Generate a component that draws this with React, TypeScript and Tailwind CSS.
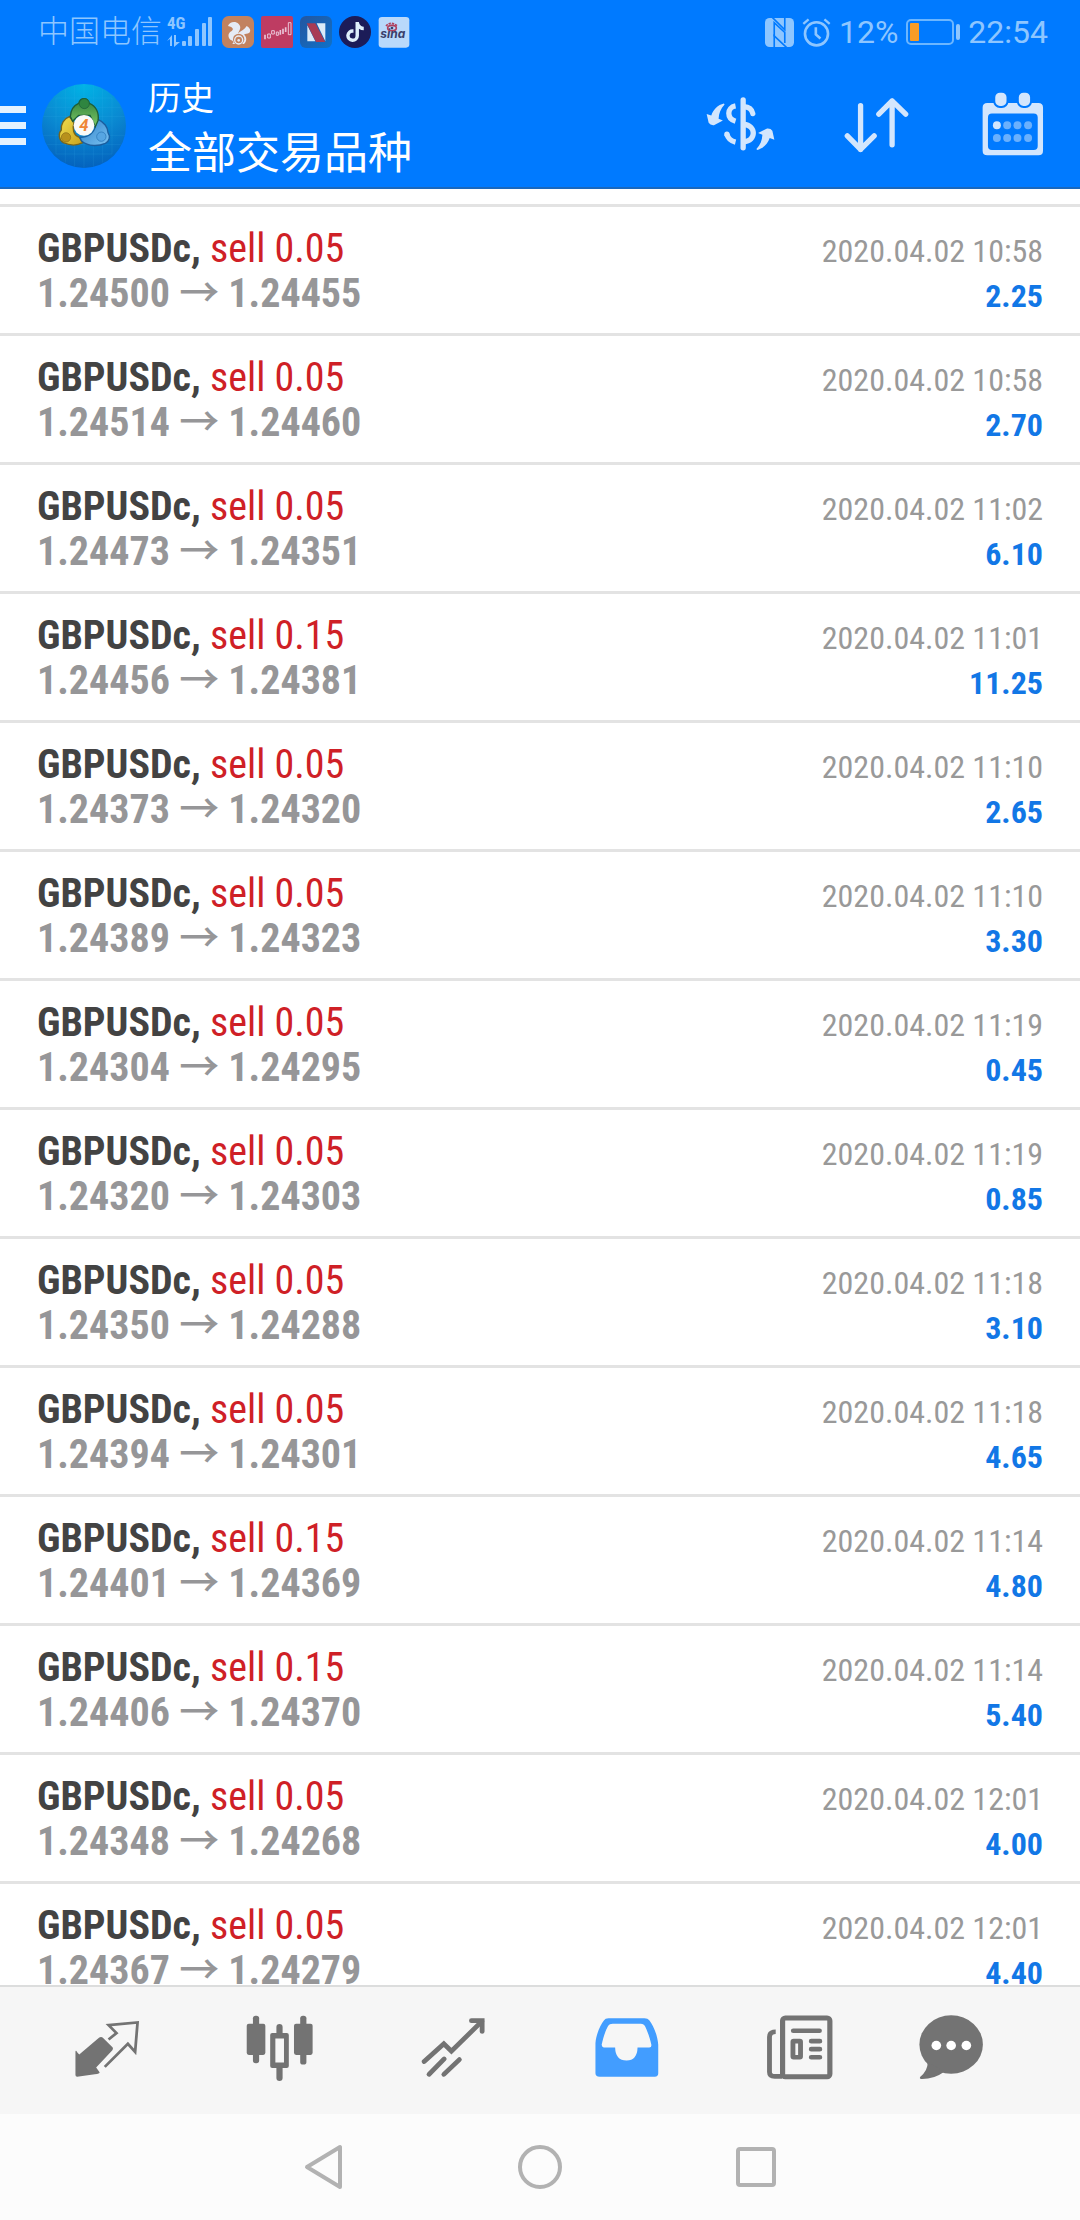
import type { ReactNode } from 'react';
import { FaTiktok } from 'react-icons/fa6';

type Deal = {
  volume: string;
  open: string;
  close: string;
  time: string;
  profit: string;
};

const deals: Deal[] = [
  { volume: '0.05', open: '1.24500', close: '1.24455', time: '2020.04.02 10:58', profit: '2.25' },
  { volume: '0.05', open: '1.24514', close: '1.24460', time: '2020.04.02 10:58', profit: '2.70' },
  { volume: '0.05', open: '1.24473', close: '1.24351', time: '2020.04.02 11:02', profit: '6.10' },
  { volume: '0.15', open: '1.24456', close: '1.24381', time: '2020.04.02 11:01', profit: '11.25' },
  { volume: '0.05', open: '1.24373', close: '1.24320', time: '2020.04.02 11:10', profit: '2.65' },
  { volume: '0.05', open: '1.24389', close: '1.24323', time: '2020.04.02 11:10', profit: '3.30' },
  { volume: '0.05', open: '1.24304', close: '1.24295', time: '2020.04.02 11:19', profit: '0.45' },
  { volume: '0.05', open: '1.24320', close: '1.24303', time: '2020.04.02 11:19', profit: '0.85' },
  { volume: '0.05', open: '1.24350', close: '1.24288', time: '2020.04.02 11:18', profit: '3.10' },
  { volume: '0.05', open: '1.24394', close: '1.24301', time: '2020.04.02 11:18', profit: '4.65' },
  { volume: '0.15', open: '1.24401', close: '1.24369', time: '2020.04.02 11:14', profit: '4.80' },
  { volume: '0.15', open: '1.24406', close: '1.24370', time: '2020.04.02 11:14', profit: '5.40' },
  { volume: '0.05', open: '1.24348', close: '1.24268', time: '2020.04.02 12:01', profit: '4.00' },
  { volume: '0.05', open: '1.24367', close: '1.24279', time: '2020.04.02 12:01', profit: '4.40' },
];

function SignalIcon() {
  return (
    <svg viewBox="0 0 48 32" className="mr-2 ml-1 h-8 w-12 overflow-visible" fill="currentColor">
      <text x="1" y="13" fontSize="17" fontWeight="700" fontFamily="Roboto Condensed">
        4G
      </text>
      <path d="M1 25l5-6v11H4v-7zM8 19h2v7h4l-6 5z" />
      <rect x="16" y="25" width="4" height="5" rx="1" />
      <rect x="22" y="20" width="4" height="10" rx="1" />
      <rect x="29" y="13" width="4" height="17" rx="1" />
      <rect x="36" y="7" width="4" height="23" rx="1" />
      <rect x="42" y="1" width="4" height="29" rx="1" />
    </svg>
  );
}

function BrowserAppIcon() {
  return (
    <svg viewBox="0 0 96 96" className="size-8">
      <rect width="96" height="96" rx="20" fill="#c2825f" />
      <path
        d="M18 30C22 18 40 14 50 24C60 34 52 44 48 52C58 44 68 40 74 30C84 36 88 44 82 50C76 54 70 52 66 56C76 64 74 76 66 84H30C38 80 34 74 26 72C18 66 16 52 28 46C36 40 34 34 18 30Z"
        fill="#e6ebf5"
      />
      <circle cx="50" cy="70" r="17" fill="#c2825f" />
      <circle cx="50" cy="72" r="12" fill="none" stroke="#e6ebf5" strokeWidth="4" />
      <circle cx="50" cy="73" r="4" fill="#e6ebf5" />
    </svg>
  );
}

function StocksAppIcon() {
  return (
    <svg viewBox="0 0 96 96" className="size-8">
      <rect width="96" height="96" rx="6" fill="#be3c62" />
      <path
        d="M12 56v14M58 42v14M66 38v16M74 34v14"
        stroke="#e9c3d6"
        strokeWidth="5"
      />
      <path
        d="M20 54h8v12h-8zM32 44h8v10h-8zM46 48h6v10h-6zM82 20h8v36h-8z"
        fill="none"
        stroke="#e9c3d6"
        strokeWidth="3"
      />
    </svg>
  );
}

function MailAppIcon() {
  return (
    <svg viewBox="0 0 96 96" className="size-8">
      <defs>
        <linearGradient id="mail-bg" x1="0" y1="0" x2="1" y2="1">
          <stop offset="0" stopColor="#2456a0" />
          <stop offset="1" stopColor="#0f71c8" />
        </linearGradient>
      </defs>
      <rect width="96" height="96" rx="18" fill="url(#mail-bg)" />
      <path d="M22 28L46 76H22ZM50 22H76V76Z" fill="#dcebf8" />
      <path d="M20 22H46L76 78H48Z" fill="#a83b55" />
    </svg>
  );
}

function TikTokAppIcon() {
  return (
    <span className="flex size-8 items-center justify-center rounded-full bg-[#1c1c58] text-[#dff0fb]">
      <FaTiktok className="size-5" />
    </span>
  );
}

function SinaAppIcon() {
  return (
    <svg viewBox="0 0 96 96" className="size-8">
      <rect x="2" y="3" width="92" height="92" rx="10" fill="#b9d9fb" />
      <ellipse cx="42" cy="36" rx="13" ry="8" fill="none" stroke="#b0405e" strokeWidth="5" />
      <circle cx="42" cy="36" r="4" fill="#39406c" />
      <path d="M24 30Q38 14 58 30" fill="none" stroke="#b0405e" strokeWidth="5" strokeDasharray="7 3" />
      <text x="7" y="67" fontSize="36" fontWeight="700" fontStyle="italic" fontFamily="Inter" fill="#39406c">
        sina
      </text>
    </svg>
  );
}

function NfcIcon() {
  return (
    <svg viewBox="0 0 88 88" className="h-[29px] w-[29px]">
      <rect width="88" height="88" rx="14" fill="currentColor" />
      <g fill="none" stroke="#007aff" strokeWidth="5">
        <path d="M22 -2L60 36V-2" />
        <path d="M66 90L28 54V90" />
        <path d="M28 56V14L60 44V76" />
      </g>
    </svg>
  );
}

function AlarmIcon() {
  return (
    <svg viewBox="0 0 88 88" className="h-[29px] w-[29px]" fill="none" stroke="currentColor">
      <circle cx="44" cy="48" r="35" strokeWidth="8" />
      <path d="M42 28V50L56 62" strokeWidth="8" />
      <path d="M4 18L20 4M84 18L68 4" strokeWidth="7" />
    </svg>
  );
}

function BatteryIcon() {
  return (
    <svg viewBox="0 0 54 26" className="mx-2 h-[26px] w-[54px]">
      <rect x="1" y="1" width="46" height="24" rx="4" fill="none" stroke="#6cb6ff" strokeWidth="2" />
      <rect x="4" y="4" width="9" height="18" rx="1" fill="#f79c26" />
      <rect x="50" y="5" width="4" height="16" rx="2" fill="#8ec6ff" />
    </svg>
  );
}

function StatusBar() {
  return (
    <div className="flex h-16 items-center justify-between pr-8 pl-[38px] text-[#8ec6ff]">
      <div className="flex items-center">
        <span className="text-[31px] font-light">中国电信</span>
        <SignalIcon />
        <div className="flex items-center gap-[7px]">
          <BrowserAppIcon />
          <StocksAppIcon />
          <MailAppIcon />
          <TikTokAppIcon />
          <SinaAppIcon />
        </div>
      </div>
      <div className="flex items-center font-[Roboto,sans-serif] text-[32px]">
        <NfcIcon />
        <span className="mx-2 flex">
          <AlarmIcon />
        </span>
        <span>12%</span>
        <BatteryIcon />
        <span>22:54</span>
      </div>
    </div>
  );
}

function AppLogo() {
  return (
    <svg viewBox="18 18 252 252" className="size-[84px]">
      <defs>
        <radialGradient id="logo-bg" cx=".5" cy="0" r="1">
          <stop offset="0" stopColor="#00b4e6" />
          <stop offset=".55" stopColor="#0a8ad2" />
          <stop offset="1" stopColor="#0462bd" />
        </radialGradient>
        <linearGradient id="logo-green" x1="0" y1="0" x2="0" y2="1">
          <stop offset="0" stopColor="#2f7f3c" />
          <stop offset="1" stopColor="#7cc866" />
        </linearGradient>
        <linearGradient id="logo-yellow" x1="0" y1="0" x2="1" y2="1">
          <stop offset="0" stopColor="#f2e050" />
          <stop offset="1" stopColor="#c9a21c" />
        </linearGradient>
        <linearGradient id="logo-blue" x1="0" y1="0" x2="1" y2="1">
          <stop offset="0" stopColor="#2b7fc8" />
          <stop offset="1" stopColor="#7cc3f2" />
        </linearGradient>
      </defs>
      <circle cx="144" cy="144" r="126" fill="url(#logo-bg)" />
      <path
        d="M60 60V228M88 34V254M116 22V266M144 18V270M172 22V266M200 34V254M228 60V228M60 60H228M34 88H254M22 116H266M22 172H266M34 200H254M60 228H228"
        stroke="#46bdf0"
        strokeOpacity=".2"
        strokeWidth="2"
      />
      <path d="M100 116C84 122 74 138 76 156C66 166 68 186 82 194C100 202 122 204 140 194L130 178C112 172 108 152 114 134Z" fill="url(#logo-yellow)" stroke="#77651c" strokeWidth="4" />
      <path d="M186 124C204 132 216 148 216 164C224 176 220 190 208 196C190 204 158 208 136 188L132 178C156 178 174 166 178 144Z" fill="url(#logo-blue)" stroke="#1b5e9f" strokeWidth="4" />
      <path d="M144 62C152 62 158 68 160 76C180 84 190 104 186 128L178 146L162 112H128L110 130L103 116C104 96 114 82 128 76C130 68 136 62 144 62Z" fill="url(#logo-green)" stroke="#1d5d38" strokeWidth="4" />
      <circle cx="145" cy="77" r="15" fill="#2f8540" stroke="#1d5d38" strokeWidth="2" />
      <circle cx="90" cy="178" r="14" fill="#b8911c" stroke="#8a6d18" strokeWidth="2" />
      <circle cx="196" cy="176" r="14" fill="#56a5e2" stroke="#2471b4" strokeWidth="2" />
      <circle cx="144" cy="142" r="31" fill="#fbfaf8" />
      <text x="144" y="160" textAnchor="middle" fontSize="50" fontWeight="700" fontStyle="italic" fontFamily="Roboto" fill="#ef8636">
        4
      </text>
    </svg>
  );
}

function DollarIcon() {
  const arrow = 'M60 40C42 44 28 58 22 76L8 71L14 98Q19 106 30 105L57 91L44 86C45 70 50 55 62 43Z';
  return (
    <svg viewBox="0 0 220 200" className="h-[67px] w-[73px]" fill="none" stroke="currentColor" strokeWidth="16">
      <path d={arrow} fill="currentColor" stroke="none" />
      <path d={arrow} fill="currentColor" stroke="none" transform="rotate(180 110 110)" />
      <path d="M118 29V173" strokeLinecap="round" />
      <path d="M95 47C68 52 68 85 95 93" />
      <path d="M69 132Q74 151 95 156" />
      <path d="M69 132V133M120 49Q143 50 147 70" strokeLinecap="round" />
      <path d="M120 103C158 105 158 153 120 155" />
    </svg>
  );
}

function SortIcon() {
  return (
    <svg
      viewBox="0 0 220 200"
      className="h-[67px] w-[73px]"
      fill="none"
      stroke="currentColor"
      strokeWidth="16"
      strokeLinecap="round"
      strokeLinejoin="round"
    >
      <path d="M62 46V178M22 137L62 178L103 137" />
      <path d="M157 164V32M117 72L157 32L198 72" />
    </svg>
  );
}

function CalendarIcon() {
  return (
    <svg viewBox="0 0 220 200" className="h-[67px] w-[73px]" fill="currentColor">
      <path
        fillRule="evenodd"
        d="M34 38H188Q202 38 202 52V182Q202 196 188 196H34Q20 196 20 182V52Q20 38 34 38ZM48 70Q36 70 36 82V168Q36 180 48 180H174Q186 180 186 168V82Q186 70 174 70Z"
      />
      <g stroke="#007aff" strokeWidth="6">
        <rect x="55" y="4" width="40" height="46" rx="17" />
        <rect x="126" y="4" width="40" height="46" rx="17" />
      </g>
      <circle cx="63" cy="105" r="12" />
      <g opacity=".5">
        <circle cx="94" cy="105" r="12" />
        <circle cx="125" cy="105" r="12" />
        <circle cx="157" cy="105" r="12" />
        <circle cx="63" cy="144" r="12" />
        <circle cx="94" cy="144" r="12" />
        <circle cx="125" cy="144" r="12" />
        <circle cx="157" cy="144" r="12" />
      </g>
    </svg>
  );
}

function Header() {
  const actions: { label: string; icon: ReactNode }[] = [
    { label: '品种', icon: <DollarIcon /> },
    { label: '排序', icon: <SortIcon /> },
    { label: '日期', icon: <CalendarIcon /> },
  ];

  return (
    <header className="shrink-0 border-b-2 border-[#1a68bd] bg-[#007aff]">
      <StatusBar />
      <div className="flex h-[123px] items-center">
        <button type="button" aria-label="菜单" className="flex items-center gap-4 text-[#e4f2ff]">
          <svg viewBox="0 0 26 39" className="h-[39px] w-[26px]" fill="currentColor">
            <path d="M0 0H26V7H0ZM0 16H26V23H0ZM0 32H26V39H0Z" />
          </svg>
          <AppLogo />
        </button>
        <div className="ml-[22px] flex-1 pt-1.5 text-white">
          <p className="text-[33px] leading-[50px]">历史</p>
          <h1 className="text-[44px] leading-[60px] font-normal">全部交易品种</h1>
        </div>
        <div className="flex pb-1 text-[#d3e6fd]">
          {actions.map((action) => (
            <button
              key={action.label}
              type="button"
              aria-label={action.label}
              className="flex w-[136px] items-center justify-center"
            >
              {action.icon}
            </button>
          ))}
        </div>
      </div>
    </header>
  );
}

function DealRow({ deal }: { deal: Deal }) {
  return (
    <li className="border-t-[3px] border-[#e3e3e3] px-[37px] pt-[19px] pb-[17px] leading-[45px]">
      <div className="flex h-[45px] items-baseline justify-between">
        <p className="text-[40px] text-[#cf2026]">
          <span className="font-bold text-[#434343]">GBPUSDc,</span> sell {deal.volume}
        </p>
        <time className="text-[32px] text-[#999999]">{deal.time}</time>
      </div>
      <div className="flex h-[45px] items-baseline justify-between font-bold">
        <p className="text-[40px] text-[#969698]">
          {deal.open}{' '}
          <span className="font-['Noto_Sans_CJK_SC',sans-serif] leading-5 font-medium">→</span>{' '}
          {deal.close}
        </p>
        <p className="text-[32px] text-[#1277e6]">{deal.profit}</p>
      </div>
    </li>
  );
}

function TabIcon({ children }: { children: ReactNode }) {
  return (
    <svg
      viewBox="0 0 200 200"
      preserveAspectRatio="none"
      className="h-[67px] w-[69px] overflow-visible"
      fill="currentColor"
    >
      {children}
    </svg>
  );
}

function QuotesIcon() {
  return (
    <TabIcon>
      <path d="M10 115Q11 110 15 117L21 124L79 73Q85 69 91 75L118 103Q120 107 117 111L70 163L80 177Q81 182 66 183L15 190Q10 190 10 185Z" />
      <path d="M106 79L129 60L106 36L190 28L183 116L162 92L95 161" fill="none" stroke="currentColor" strokeWidth="8" />
    </TabIcon>
  );
}

function CandlesIcon() {
  return (
    <TabIcon>
      <rect x="5" y="32" width="54" height="93" rx="6" />
      <rect x="23" y="8" width="18" height="142" rx="8" />
      <rect x="142" y="32" width="54" height="93" rx="6" />
      <rect x="160" y="8" width="18" height="146" rx="8" />
      <path fillRule="evenodd" d="M79 60H121Q127 60 127 66V158Q127 164 121 164H79Q73 164 73 158V66Q73 60 79 60ZM88 76V148H113V76Z" />
      <path d="M91 62V42Q91 33 100 33Q109 33 109 42V62ZM91 162V194Q91 203 100 203Q109 203 109 194V162Z" />
    </TabIcon>
  );
}

function ChartIcon() {
  return (
    <TabIcon>
      <g fill="none" stroke="currentColor" strokeWidth="14" strokeLinecap="round">
        <path d="M15 145L72 92L94 114L182 25" />
        <path d="M152 23H183V55" />
        <path d="M29 183L73 137M72 183L117 139" />
      </g>
    </TabIcon>
  );
}

function InboxIcon() {
  return (
    <TabIcon>
      <path
        fillRule="evenodd"
        d="M10 180V90C12 62 25 35 35 22Q38 16 48 16H152Q162 16 166 22C178 38 190 66 192 95V180Q192 190 182 190H22Q10 190 10 180ZM28 95Q28 102 34 103H67Q68 142 100 142Q131 142 132 103H166Q173 103 172 95C168 75 160 52 153 38Q149 32 142 32H60Q50 32 47 38C40 50 32 75 28 95Z"
      />
    </TabIcon>
  );
}

function NewsIcon() {
  return (
    <TabIcon>
      <g fill="none" stroke="currentColor" strokeWidth="14" strokeLinecap="round">
        <rect x="51" y="15" width="137" height="175" rx="8" strokeWidth="15" />
        <path d="M31 56Q13 56 13 72V176Q13 189 28 189H50" strokeLinecap="butt" />
        <path d="M82 53H158M134 84H159M134 108H159M134 132H159" />
        <rect x="81" y="84" width="22" height="48" rx="2" />
      </g>
    </TabIcon>
  );
}

function ChatIcon() {
  return (
    <TabIcon>
      <ellipse cx="99" cy="94" rx="92" ry="87" />
      <path d="M31 145Q32 172 9 191Q6 197 15 197Q50 197 78 176Z" />
      <g fill="#fff">
        <circle cx="56" cy="97" r="14" />
        <circle cx="99" cy="97" r="14" />
        <circle cx="143" cy="97" r="14" />
      </g>
    </TabIcon>
  );
}

function TabBar() {
  const tab = 'flex flex-[4] items-center justify-center';
  return (
    <nav className="flex h-[129px] shrink-0 border-t-2 border-[#dcdddd] bg-[#f6f6f6] pr-16 pb-2 pl-5 text-[#737373]">
      <button type="button" aria-label="行情" className={tab}>
        <QuotesIcon />
      </button>
      <button type="button" aria-label="图表" className={tab}>
        <CandlesIcon />
      </button>
      <button type="button" aria-label="交易" className={tab}>
        <ChartIcon />
      </button>
      <button type="button" aria-label="历史" aria-current="page" className={`${tab} text-[#429dff]`}>
        <InboxIcon />
      </button>
      <button type="button" aria-label="新闻" className={tab}>
        <NewsIcon />
      </button>
      <button type="button" aria-label="消息" className="flex flex-[3] items-center justify-center">
        <ChatIcon />
      </button>
    </nav>
  );
}

function SystemNav() {
  return (
    <nav className="grid h-[106px] shrink-0 grid-cols-3 place-items-center bg-[#fcfcfc] px-[20%] text-[#b2b2b2]">
      <button type="button" aria-label="返回">
        <svg viewBox="0 0 48 48" className="size-12" fill="none" stroke="currentColor" strokeWidth="4" strokeLinejoin="round">
          <path d="M7 24L40 4V44Z" />
        </svg>
      </button>
      <button type="button" aria-label="主屏幕">
        <svg viewBox="0 0 48 48" className="size-12" fill="none" stroke="currentColor" strokeWidth="4">
          <circle cx="24" cy="24" r="20" />
        </svg>
      </button>
      <button type="button" aria-label="最近任务">
        <svg viewBox="0 0 48 48" className="size-12" fill="none" stroke="currentColor" strokeWidth="4">
          <rect x="6" y="6" width="36" height="36" rx="2" />
        </svg>
      </button>
    </nav>
  );
}

export default function App() {
  return (
    <div className="flex h-screen flex-col bg-white font-['Roboto_Condensed','Noto_Sans_CJK_SC',sans-serif]">
      <Header />
      <main className="flex-1 overflow-hidden pt-[15px]">
        <ul>
          {deals.map((deal) => (
            <DealRow key={deal.open} deal={deal} />
          ))}
        </ul>
      </main>
      <TabBar />
      <SystemNav />
    </div>
  );
}
